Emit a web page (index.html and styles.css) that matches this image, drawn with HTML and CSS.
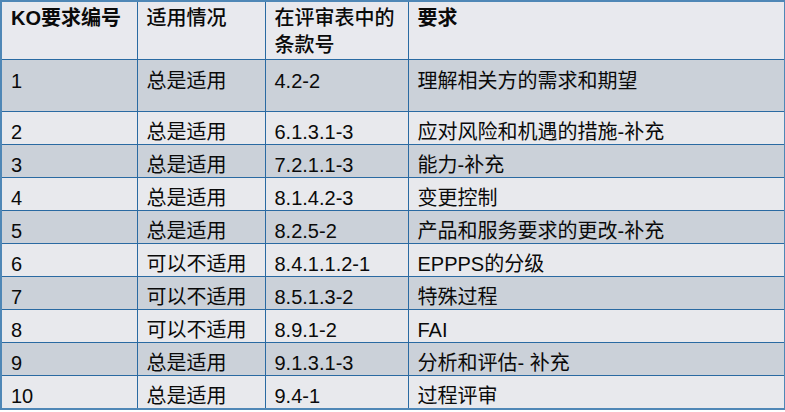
FILE: index.html
```html
<!DOCTYPE html>
<html lang="zh-CN">
<head>
<meta charset="utf-8">
<title>KO要求</title>
<link rel="stylesheet" href="styles.css">
</head>
<body>
<table class="ko-table">
  <colgroup>
    <col class="c1"><col class="c2"><col class="c3"><col class="c4">
  </colgroup>
  <thead>
    <tr class="head">
      <th class="strong">KO要求编号</th>
      <th>适用情况</th>
      <th>在评审表中的<br>条款号</th>
      <th class="strong">要求</th>
    </tr>
  </thead>
  <tbody>
    <tr class="dark tall"><td>1</td><td>总是适用</td><td>4.2-2</td><td>理解相关方的需求和期望</td></tr>
    <tr class="light"><td>2</td><td>总是适用</td><td>6.1.3.1-3</td><td>应对风险和机遇的措施-补充</td></tr>
    <tr class="dark"><td>3</td><td>总是适用</td><td>7.2.1.1-3</td><td>能力-补充</td></tr>
    <tr class="light"><td>4</td><td>总是适用</td><td>8.1.4.2-3</td><td>变更控制</td></tr>
    <tr class="dark"><td>5</td><td>总是适用</td><td>8.2.5-2</td><td>产品和服务要求的更改-补充</td></tr>
    <tr class="light"><td>6</td><td>可以不适用</td><td>8.4.1.1.2-1</td><td>EPPPS的分级</td></tr>
    <tr class="dark"><td>7</td><td>可以不适用</td><td>8.5.1.3-2</td><td>特殊过程</td></tr>
    <tr class="light"><td>8</td><td>可以不适用</td><td>8.9.1-2</td><td>FAI</td></tr>
    <tr class="dark"><td>9</td><td>总是适用</td><td>9.1.3.1-3</td><td>分析和评估- 补充</td></tr>
    <tr class="light"><td>10</td><td>总是适用</td><td>9.4-1</td><td>过程评审</td></tr>
  </tbody>
</table>
</body>
</html>
```
FILE: styles.css
```css
html, body {
  margin: 0;
  padding: 0;
  background: #ffffff;
}

.ko-table {
  border-collapse: collapse;
  table-layout: fixed;
  width: 784px;
  border: 2px solid #4f87b6;
  font-family: "Liberation Sans", "Noto Sans CJK SC", sans-serif;
  font-size: 20px;
  color: #0a0a0a;
}

.c1 { width: 136px; }
.c2 { width: 128px; }
.c3 { width: 143px; }
.c4 { width: 377px; }

.ko-table th,
.ko-table td {
  border: 1px solid #2a6aa2;
  padding: 0 4px 0 9px;
  vertical-align: top;
  text-align: left;
  white-space: nowrap;
}

.head th {
  height: 57px;
  box-sizing: border-box;
  padding-top: 3px;
  line-height: 27px;
  font-weight: 500;
  background: #e8e9ee;
}

.head th.strong {
  font-weight: 700;
}

.ko-table td {
  height: 33px;
  box-sizing: border-box;
  padding-top: 9px;
  line-height: 23px;
}

.ko-table tr.tall td {
  height: 52px;
  padding-top: 10px;
}

.dark td { background: #cbd1d9; }
.light td { background: #e8e9ed; }
```
